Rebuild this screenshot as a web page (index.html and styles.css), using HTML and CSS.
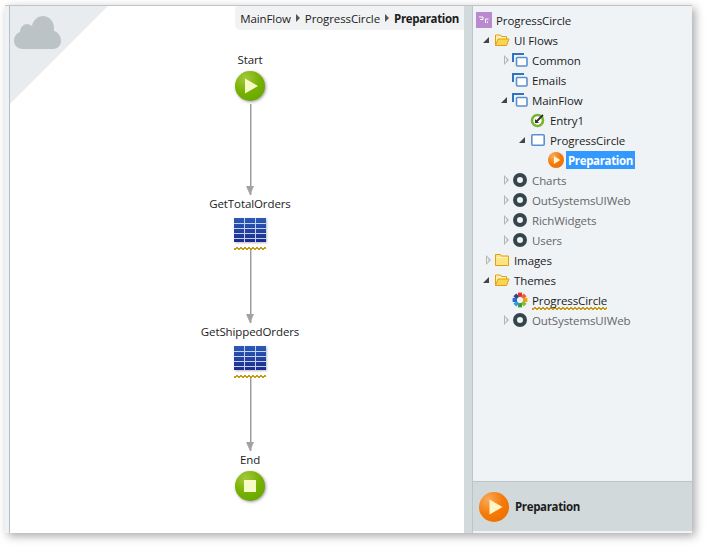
FILE: index.html
```html
<!DOCTYPE html>
<html lang="en">
<head>
    <meta charset="UTF-8">
    <meta name="viewport" content="width=device-width, initial-scale=1.0">
    <title>ProgressCircle - Preparation</title>
    <link rel="stylesheet" href="styles.css">
</head>
<body>

    <svg class="defs" width="0" height="0">
        <defs>
            <radialGradient id="greenBall" cx="35%" cy="25%" r="80%">
                <stop offset="0" stop-color="#a4c93c"/>
                <stop offset="0.6" stop-color="#76b000"/>
                <stop offset="1" stop-color="#6aa800"/>
            </radialGradient>
            <radialGradient id="orangeBall" cx="30%" cy="25%" r="80%">
                <stop offset="0" stop-color="#f9a95a"/>
                <stop offset="0.6" stop-color="#f57c0a"/>
                <stop offset="1" stop-color="#f07000"/>
            </radialGradient>
            <linearGradient id="tableBlue" x1="0" y1="0" x2="0" y2="1">
                <stop offset="0" stop-color="#2a5cb8"/>
                <stop offset="1" stop-color="#1c2c8e"/>
            </linearGradient>
            <symbol id="folderOpen" viewBox="0 0 16 14">
                <path d="M1.500 12.500V2h5l1 1.500h5V6" fill="#fdf0b0" stroke="#e0a010"/>
                <path d="M1.500 12.500 4 6h11l-2.500 6.500z" fill="#fbd450" stroke="#e0a010"/>
            </symbol>
            <symbol id="folderShut" viewBox="0 0 16 14">
                <path d="M1.500 12.500V1.500h5l1 1.500h7v9.500z" fill="#fce480" stroke="#e0a010"/>
                <path d="M2.500 4.500h11" stroke="#fff6c8"/>
            </symbol>
            <symbol id="flowIcon" viewBox="0 0 16 14">
                <path d="M1 9V1h11" fill="none" stroke="#2f74c4" stroke-width="2"/>
                <rect x="4.500" y="4.500" width="10.500" height="8.500" rx="1" fill="#fff" stroke="#5b8fd0" stroke-width="1.600"/>
            </symbol>
            <symbol id="moduleIcon" viewBox="-1 -1 16 16">
                <circle cx="7" cy="7" r="5" fill="none" stroke="#36454c" stroke-width="4"/>
            </symbol>
            <symbol id="tableIcon" viewBox="0 0 32 24">
                <rect width="32" height="24" fill="url(#tableBlue)"/>
                <path d="M0 5.500h32M0 10.500h32M0 15.500h32M0 20.500h32M10.500 0v24M21.500 0v24" stroke="#c4d0ec" stroke-width="1"/>
            </symbol>
        </defs>
    </svg>

    <div class="window">
        <div class="canvas">
            <div class="corner">
                <svg class="cloud" viewBox="0 0 47 33">
                    <path d="M9 33C3 33 0 29 0 25 0 20 3 17 6 16 6 11 10 8 13 8 15 8 17 9 18 10 19 4 24 0 29 0 35 0 40 5 40 12 40 13 40 14 40 15 44 16 47 20 47 25 47 29 44 33 39 33z" fill="#bcc3c6"/>
                </svg>
            </div>

            <div class="crumbs">
                <span>MainFlow</span><i class="crumb-sep"></i><span>ProgressCircle</span><i class="crumb-sep"></i><b>Preparation</b>
            </div>

            <div class="flow">
                <div class="node">
                    <div class="node-name">Start</div>
                    <svg class="ball" viewBox="0 0 30 30">
                        <circle cx="15" cy="15" r="15" fill="url(#greenBall)"/>
                        <path d="M10 7.500v15l13-7.500z" fill="#f6fbc8"/>
                    </svg>
                </div>
                <div class="link link-a"></div>
                <div class="node">
                    <div class="node-name">GetTotalOrders</div>
                    <svg class="table-icon"><use href="#tableIcon"/></svg>
                    <div class="squiggle"></div>
                </div>
                <div class="link link-b"></div>
                <div class="node">
                    <div class="node-name">GetShippedOrders</div>
                    <svg class="table-icon"><use href="#tableIcon"/></svg>
                    <div class="squiggle"></div>
                </div>
                <div class="link link-b"></div>
                <div class="node">
                    <div class="node-name">End</div>
                    <svg class="ball" viewBox="0 0 30 30">
                        <circle cx="15" cy="15" r="15" fill="url(#greenBall)"/>
                        <rect x="9" y="9" width="12" height="12" fill="#f6fbc8"/>
                    </svg>
                </div>
            </div>
        </div>

        <div class="splitter"></div>

        <div class="side">
            <ul class="tree">
                <li class="row lvl-0">
                    <svg class="ico" viewBox="0 0 16 16"><rect width="16" height="16" fill="#b98ad0"/><path d="M3 5h4v2.500H4M9.500 11V7h3M11.500 9.500v1.500" fill="none" stroke="#fff" stroke-width="1"/></svg>
                    <span>ProgressCircle</span></li>
                <li class="row lvl-1"><span class="arrow open"></span><svg class="ico"><use href="#folderOpen"/></svg><span>UI Flows</span></li>
                <li class="row lvl-2"><span class="arrow shut"></span><svg class="ico"><use href="#flowIcon"/></svg><span>Common</span></li>
                <li class="row lvl-2"><span class="arrow"></span><svg class="ico"><use href="#flowIcon"/></svg><span>Emails</span></li>
                <li class="row lvl-2"><span class="arrow open"></span><svg class="ico"><use href="#flowIcon"/></svg><span>MainFlow</span></li>
                <li class="row lvl-3"><span class="arrow"></span>
                    <svg class="ico" viewBox="0 0 16 16"><circle cx="7.500" cy="8.500" r="5.500" fill="#fff" stroke="#7ab52a" stroke-width="2.600"/><path d="M5.500 10.500 13 3" stroke="#333" stroke-width="2"/><path d="M5 7v4h4z" fill="#333"/></svg>
                    <span>Entry1</span></li>
                <li class="row lvl-3"><span class="arrow open"></span>
                    <svg class="ico" viewBox="0 0 16 14"><rect x="1.800" y="1.800" width="12.400" height="10.400" rx="1" fill="#fff" stroke="#5b8fd0" stroke-width="1.600"/></svg>
                    <span>ProgressCircle</span></li>
                <li class="row lvl-4"><span class="arrow"></span>
                    <svg class="ico" viewBox="0 0 30 30"><circle cx="15" cy="15" r="15" fill="url(#orangeBall)"/><path d="M11 7.500v15l12-7.500z" fill="#fff6d8"/></svg>
                    <span class="selected">Preparation</span></li>
                <li class="row lvl-2 dim"><span class="arrow shut"></span><svg class="ico"><use href="#moduleIcon"/></svg><span>Charts</span></li>
                <li class="row lvl-2 dim"><span class="arrow shut"></span><svg class="ico"><use href="#moduleIcon"/></svg><span>OutSystemsUIWeb</span></li>
                <li class="row lvl-2 dim"><span class="arrow shut"></span><svg class="ico"><use href="#moduleIcon"/></svg><span>RichWidgets</span></li>
                <li class="row lvl-2 dim"><span class="arrow shut"></span><svg class="ico"><use href="#moduleIcon"/></svg><span>Users</span></li>
                <li class="row lvl-1"><span class="arrow shut"></span><svg class="ico"><use href="#folderShut"/></svg><span>Images</span></li>
                <li class="row lvl-1"><span class="arrow open"></span><svg class="ico"><use href="#folderOpen"/></svg><span>Themes</span></li>
                <li class="row lvl-2"><span class="arrow"></span>
                    <svg class="ico" viewBox="0 0 16 16">
                        <g fill="none" stroke-width="4">
                            <path d="M2.800 2.800 5.900 5.900" stroke="#3a3f8f"/>
                            <path d="M8 .6V5" stroke="#d8342c"/>
                            <path d="M13.200 2.800 10.100 5.900" stroke="#e8672c"/>
                            <path d="M15.400 8H11" stroke="#f0a020"/>
                            <path d="M13.200 13.200 10.100 10.100" stroke="#8cbc28"/>
                            <path d="M8 15.400V11" stroke="#3c9c3c"/>
                            <path d="M2.800 13.200 5.900 10.100" stroke="#30a0d8"/>
                            <path d="M.6 8H5" stroke="#2a6cc8"/>
                        </g>
                    </svg>
                    <span class="warn">ProgressCircle</span></li>
                <li class="row lvl-2 dim"><span class="arrow shut"></span><svg class="ico"><use href="#moduleIcon"/></svg><span>OutSystemsUIWeb</span></li>
            </ul>

            <div class="details">
                <svg class="details-ball" viewBox="0 0 30 30"><circle cx="15" cy="15" r="15" fill="url(#orangeBall)"/><path d="M10.500 7.500v15l13-7.500z" fill="#fff6c8"/></svg>
                <b>Preparation</b>
            </div>
        </div>
    </div>

</body>
</html>
```

FILE: styles.css
```css
body {
    margin: 0;
    height: 548px;
    overflow: hidden;
    box-sizing: border-box;
    padding: 5px 0 0 5px;
    background: #fff;
    font-family: "Open Sans", "Noto Sans", sans-serif;
    font-size: 11.5px;
    letter-spacing: -0.1px;
    color: #1c1c1c;
}
b, .selected {
    letter-spacing: -0.35px;
}
.defs {
    position: absolute;
}
.window {
    display: flex;
    width: 687px;
    height: 528px;
    box-sizing: border-box;
    border-top: 1px solid #bfc6c9;
    background: #eef2f6;
    box-shadow: 3px 3px 9px rgba(0, 0, 0, 0.35);
}

/* canvas */
.canvas {
    position: relative;
    width: 454px;
    margin-left: 4px;
    border-left: 1px solid #b4bec4;
    background: #fff;
}
.corner {
    position: absolute;
    left: 0;
    top: 0;
    width: 98px;
    height: 98px;
    background: #e8ecef;
    clip-path: polygon(0 0, 100% 0, 0 100%);
}
.cloud {
    position: absolute;
    left: 4px;
    top: 10px;
    width: 47px;
    height: 33px;
}
.crumbs {
    position: absolute;
    right: 0;
    top: 0;
    display: flex;
    align-items: center;
    gap: 5px;
    height: 24px;
    padding: 0 5px;
    background: #f1f2f3;
    border-bottom-left-radius: 5px;
    border-top-left-radius: 3px;
}
.crumb-sep {
    width: 0;
    height: 0;
    border-left: 4px solid #555;
    border-top: 4px solid transparent;
    border-bottom: 4px solid transparent;
}
.flow {
    display: flex;
    flex-direction: column;
    align-items: center;
    padding: 45px 0 0 26px;
}
.node {
    display: flex;
    flex-direction: column;
    align-items: center;
}
.node-name {
    height: 17px;
    line-height: 17px;
    white-space: nowrap;
}
.ball {
    width: 30px;
    height: 30px;
    margin-top: 3px;
    filter: drop-shadow(1px 1px 1.5px rgba(0, 0, 0, 0.4));
}
.table-icon {
    width: 32px;
    height: 24px;
    margin-top: 6px;
    filter: drop-shadow(1px 1px 1px rgba(0, 0, 0, 0.25));
}
.squiggle {
    width: 32px;
    height: 3px;
    margin-top: 5px;
    background:
        linear-gradient(135deg, transparent 40%, #c89b10 40% 60%, transparent 60%) 0 0 / 4px 3px,
        linear-gradient(45deg, transparent 40%, #c89b10 40% 60%, transparent 60%) 2px 0 / 4px 3px;
}
.link {
    position: relative;
    width: 1px;
    background: #9c9c9c;
    box-shadow: 1px 0 0 #d0d0d0;
}
.link::after {
    content: "";
    position: absolute;
    left: -4px;
    bottom: 0;
    border-top: 9px solid #a2a2a2;
    border-left: 4.5px solid transparent;
    border-right: 4.5px solid transparent;
}
.link-a { height: 91px; margin-top: 3px; }
.link-b { height: 73px; }

/* tree */
.splitter {
    box-sizing: border-box;
    width: 9px;
    background: #d2dadc;
    border-right: 1px solid #bcc5c9;
}
.side {
    display: flex;
    flex-direction: column;
    width: 219px;
    background: #eff3f6;
}
.tree {
    flex: 1;
    list-style: none;
    margin: 0;
    padding: 4px 0 0 0;
}
.row {
    display: flex;
    align-items: center;
    height: 20px;
    white-space: nowrap;
}
.row.dim {
    color: #666;
}
.lvl-0 { padding-left: 3px; }
.lvl-1 { padding-left: 10px; }
.lvl-2 { padding-left: 28px; }
.lvl-3 { padding-left: 46px; }
.lvl-4 { padding-left: 64px; }
.arrow {
    flex: none;
    width: 11px;
    height: 10px;
    position: relative;
}
.arrow.open::before {
    content: "";
    position: absolute;
    left: 0;
    top: 2px;
    border-bottom: 6px solid #444;
    border-left: 6px solid transparent;
}
.arrow.shut::before {
    content: "";
    position: absolute;
    left: 3px;
    top: 0;
    border-left: 5px solid #b4b4b4;
    border-top: 5px solid transparent;
    border-bottom: 5px solid transparent;
}
.arrow.shut::after {
    content: "";
    position: absolute;
    left: 4px;
    top: 2px;
    border-left: 2px solid #eff3f6;
    border-top: 3px solid transparent;
    border-bottom: 3px solid transparent;
}
.ico {
    flex: none;
    width: 16px;
    height: 16px;
    margin-right: 4px;
}
.selected {
    margin-left: -2px;
    padding: 0 2px;
    height: 18px;
    line-height: 19px;
    background: #3399ff;
    color: #fff;
    font-weight: 700;
}
.warn {
    margin-top: 2px;
    padding-bottom: 2px;
    background:
        linear-gradient(135deg, transparent 40%, #c89b10 40% 60%, transparent 60%) 0 100% / 4px 3px repeat-x,
        linear-gradient(45deg, transparent 40%, #c89b10 40% 60%, transparent 60%) 2px 100% / 4px 3px repeat-x;
}
.details {
    display: flex;
    align-items: center;
    gap: 6px;
    height: 50px;
    margin-bottom: 2px;
    padding-left: 6px;
    box-sizing: border-box;
    border-top: 1px solid #bcc5c9;
    background: #d2d9db;
}
.details-ball {
    width: 30px;
    height: 30px;
}
```
